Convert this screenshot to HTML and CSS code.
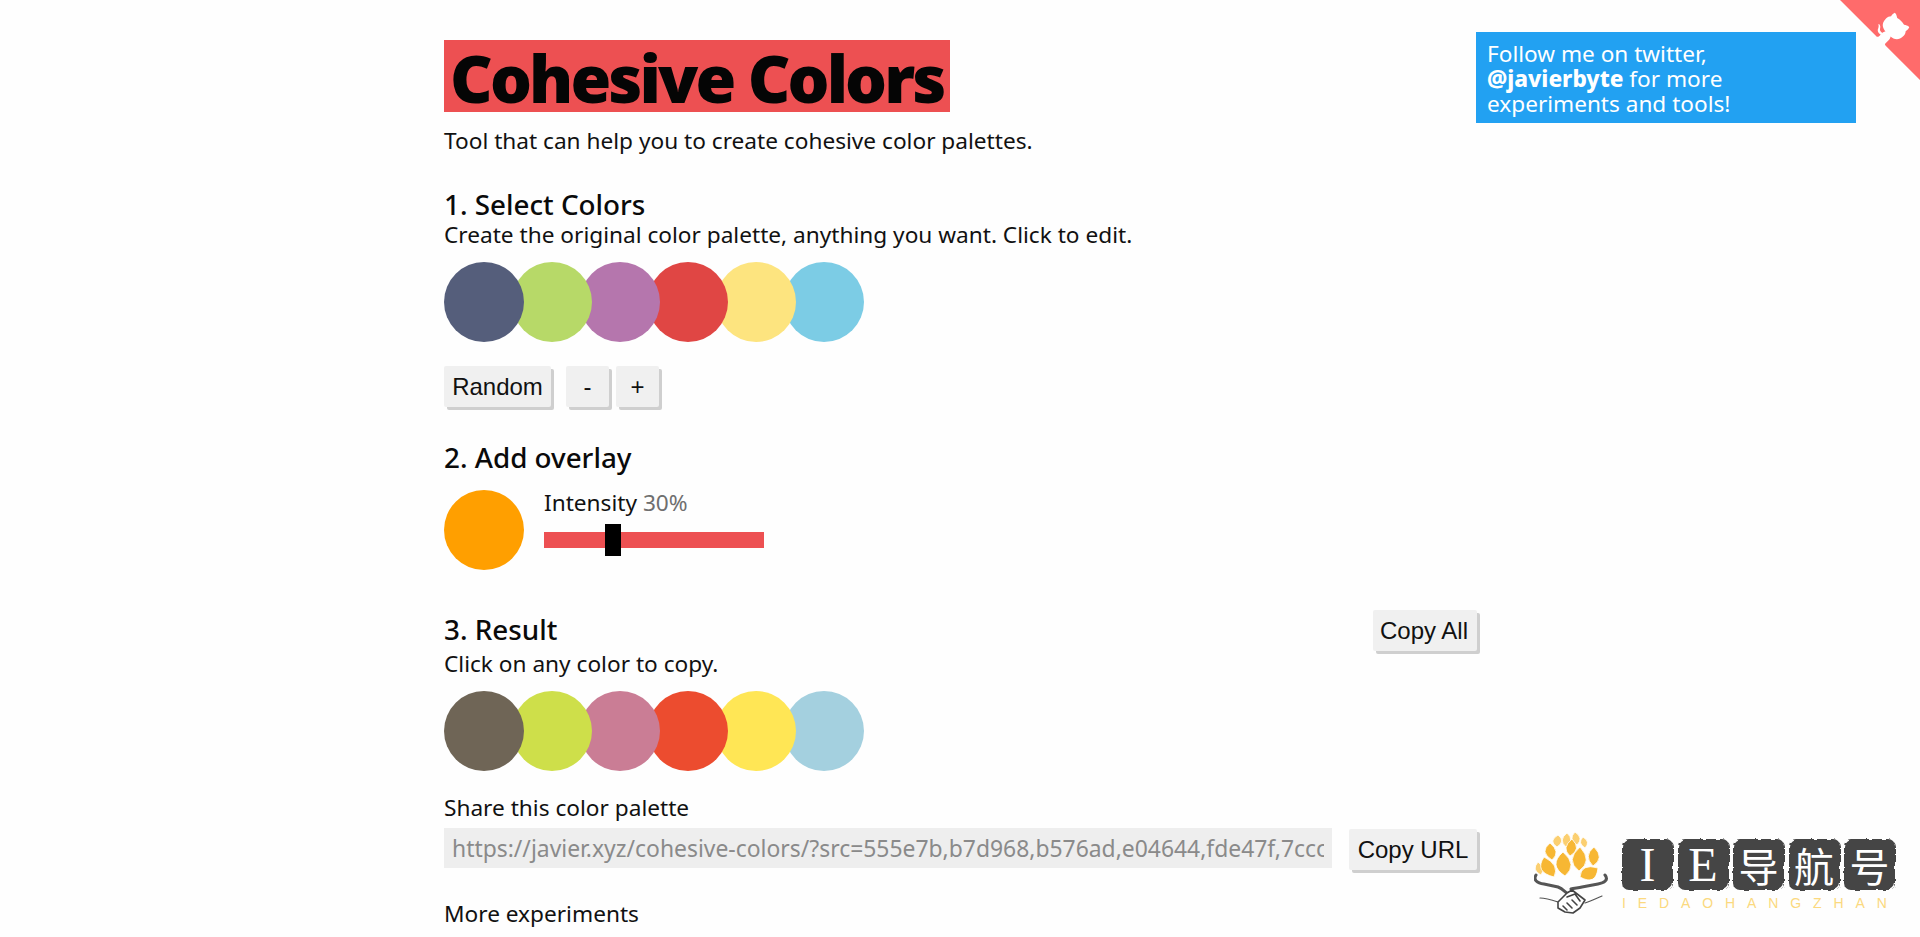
FILE: index.html
```html
<!DOCTYPE html>
<html lang="en">
<head>
<meta charset="utf-8">
<title>Cohesive Colors</title>
<link rel="stylesheet" href="styles.css">
</head>
<body>
<a class="corner" href="#" aria-label="View source">
  <svg width="80" height="80" viewBox="0 0 250 250" aria-hidden="true">
    <path class="corner-bg" d="M0,0 L115,115 L130,115 L142,142 L250,250 L250,0 Z"></path>
    <path class="corner-cat" d="M128.3,109.0 C113.8,99.7 119.0,89.6 119.0,89.6 C122.0,82.7 120.5,78.6 120.5,78.6 C119.2,72.0 123.4,76.3 123.4,76.3 C127.3,80.9 125.5,87.3 125.5,87.3 C122.9,97.6 130.6,101.9 134.4,103.2"></path>
    <path class="corner-cat" d="M115.0,115.0 C114.9,115.1 118.7,116.5 119.8,115.4 L133.7,101.6 C136.9,99.2 139.9,98.4 142.2,98.6 C133.8,88.0 127.5,74.4 143.8,58.0 C148.5,53.4 154.0,51.2 159.7,51.0 C160.3,49.4 163.2,43.6 171.4,40.1 C171.4,40.1 176.1,42.5 178.8,56.2 C183.1,58.6 187.2,61.8 190.9,65.4 C194.5,69.0 197.7,73.2 200.1,77.6 C213.8,80.2 216.3,84.9 216.3,84.9 C212.7,93.1 206.9,96.0 205.4,96.6 C205.1,102.4 203.0,107.8 198.3,112.5 C181.9,128.9 168.3,122.5 157.7,114.1 C157.9,116.9 156.7,120.9 152.7,124.9 L141.0,136.5 C139.8,137.7 141.6,141.9 141.8,141.8 Z"></path>
  </svg>
</a>
<aside class="follow">Follow me on twitter, <b>@javierbyte</b> for more experiments and tools!</aside>
<main class="page">
  <header class="head">
    <h1 class="title">Cohesive Colors</h1>
    <p class="lead">Tool that can help you to create cohesive color palettes.</p>
  </header>
  <section class="sec-select">
    <h2 class="heading">1. Select Colors</h2>
    <p class="text text-tight">Create the original color palette, anything you want. Click to edit.</p>
    <div class="dots">
      <span class="dot c1"></span><span class="dot c2"></span><span class="dot c3"></span><span class="dot c4"></span><span class="dot c5"></span><span class="dot c6"></span>
    </div>
    <div class="actions">
      <button class="btn btn-random">Random</button>
      <button class="btn btn-small btn-minus">-</button>
      <button class="btn btn-small">+</button>
    </div>
  </section>
  <section class="sec-overlay">
    <h2 class="heading">2. Add overlay</h2>
    <div class="overlay-row">
      <span class="dot overlay-dot"></span>
      <div class="intensity">
        <div class="text">Intensity <span class="muted">30%</span></div>
        <div class="slider"><span class="thumb"></span></div>
      </div>
    </div>
  </section>
  <section class="sec-result">
    <div class="result-head">
      <h2 class="heading">3. Result</h2>
      <button class="btn btn-copyall">Copy All</button>
    </div>
    <p class="text">Click on any color to copy.</p>
    <div class="dots">
      <span class="dot r1"></span><span class="dot r2"></span><span class="dot r3"></span><span class="dot r4"></span><span class="dot r5"></span><span class="dot r6"></span>
    </div>
  </section>
  <section class="sec-share">
    <div class="text">Share this color palette</div>
    <div class="share-row">
      <input class="url" readonly value="https://javier.xyz/cohesive-colors/?src=555e7b,b7d968,b576ad,e04644,fde47f,7ccce5">
      <button class="btn btn-copyurl">Copy URL</button>
    </div>
    <div class="text more">More experiments</div>
  </section>
</main>
<div class="mark">
  <svg class="mark-icon" width="76" height="84" viewBox="0 0 76 84" aria-hidden="true">
    <defs>
      <filter id="rough" x="-10%" y="-10%" width="120%" height="120%">
        <feTurbulence type="fractalNoise" baseFrequency="0.16" numOctaves="2" seed="4"></feTurbulence>
        <feDisplacementMap in="SourceGraphic" scale="4"></feDisplacementMap>
      </filter>
    </defs>
    <g class="leaf-b">
      <path d="M24 3Q14 9 23 15Q32 9 24 3Z"></path>
      <path d="M33 1Q24 8 32 15Q41 8 33 1Z"></path>
      <path d="M41 0Q34 7 43 13Q50 6 41 0Z"></path>
      <path d="M49 5Q43 11 51 16Q57 10 49 5Z"></path>
      <path d="M4 30Q-3 38 7 43Q12 36 4 30Z"></path>
    </g>
    <g class="leaf-a">
      <path d="M16 11Q5 20 18 28Q27 20 16 11Z"></path>
      <path d="M38 7Q27 16 36 24Q48 17 38 7Z"></path>
      <path d="M60 15Q49 24 59 34Q71 26 60 15Z"></path>
      <path d="M10 25Q0 40 20 45Q26 33 10 25Z"></path>
      <path d="M29 20Q14 33 31 44Q44 33 29 20Z"></path>
      <path d="M46 15Q31 28 45 39Q59 29 46 15Z"></path>
      <path d="M64 36Q47 31 46 45Q62 54 64 36Z"></path>
    </g>
    <path class="bowl" d="M2 43C-1 48 3 51 10 52L24 55C29 57 31 60 33 61M71 43C75 48 70 51 64 52L48 55C44 56 40 56 37 57"></path>
    <path class="hand-line" d="M6 66C12 66 18 68 24 70M51 71C57 69 63 66 68 64"></path>
    <path class="hand" d="M24 70L33 61L38 58L51 68L46 76L39 81L31 80L24 76ZM33 65L41 62L46 69M29 74L33 78M33 71L38 76M38 68L43 73"></path>
  </svg>
  <div class="mark-main">
    <div class="mark-tiles">
      <span class="tile tile-latin">I</span><span class="tile tile-latin">E</span><span class="tile">导</span><span class="tile">航</span><span class="tile">号</span>
    </div>
    <div class="mark-sub">IEDAOHANGZHAN</div>
  </div>
</div>
</body>
</html>
```
FILE: styles.css
```css
* { box-sizing: border-box; }
html, body { margin: 0; height: 100%; }
body {
  background: #fefefe;
  color: #111;
  font-family: "Noto Sans", "Open Sans", sans-serif;
  font-size: 22.65px;
  overflow: hidden;
  position: relative;
}
.page { width: 1036px; margin-left: 444px; padding-top: 40px; }
.title {
  margin: 0;
  height: 72px;
  width: 506px;
  padding: 0 6px;
  background: #ed5052;
  color: #050505;
  font-size: 66px;
  font-weight: 900;
  line-height: 75px;
  letter-spacing: -2.9px;
  white-space: nowrap;
}
.lead { margin: 14px 0 0; line-height: 30px; height: 30px; }
.heading { margin: 0; font-size: 27.8px; font-weight: 500; line-height: 36px; color: #0a0a0a; }
.text { margin: 0; line-height: 30px; }
.text-tight { margin-top: -2px; }
.sec-select { margin-top: 30px; }
.dots { display: flex; margin-top: 12px; }
.dot { display: block; width: 80px; height: 80px; border-radius: 50%; flex: none; }
.dots .dot { position: relative; }
.dots .dot + .dot { margin-left: -12px; }
.c1, .r1 { z-index: 6; }
.c2, .r2 { z-index: 5; }
.c3, .r3 { z-index: 4; }
.c4, .r4 { z-index: 3; }
.c5, .r5 { z-index: 2; }
.c6, .r6 { z-index: 1; }
.c1 { background: #555e7b; }
.c2 { background: #b7d968; }
.c3 { background: #b576ad; }
.c4 { background: #e04644; }
.c5 { background: #fde47f; }
.c6 { background: #7ccce5; }
.r1 { background: #6f6556; }
.r2 { background: #cedf4a; }
.r3 { background: #ca7d95; }
.r4 { background: #ec4c2f; }
.r5 { background: #ffe655; }
.r6 { background: #a4d0df; }
.actions { display: flex; margin-top: 24px; }
.btn {
  height: 41px;
  padding: 0;
  border: 0;
  background: #f0f0f0;
  box-shadow: 3px 3px 0 #cfcfcf;
  color: #111;
  font-family: "Liberation Sans", Arial, sans-serif;
  font-size: 24px;
  line-height: 36px;
  border-radius: 2px;
}
.btn-random { width: 107px; }
.btn-small { width: 43px; margin-left: 7px; }
.btn-minus { margin-left: 15px; }
.sec-overlay { margin-top: 32px; }
.overlay-row { display: flex; gap: 20px; margin-top: 15px; }
.overlay-dot { background: #ff9f00; }
.intensity { margin-top: -2px; }
.muted { color: #6f6f6f; }
.slider { position: relative; width: 220px; height: 16px; margin-top: 14px; background: #ed5052; }
.thumb { position: absolute; left: 61px; top: -8px; width: 16px; height: 32px; background: #000; }
.sec-result { margin-top: 40px; }
.result-head { display: flex; justify-content: space-between; align-items: flex-start; height: 36px; }
.result-head .heading { margin-top: 1px; }
.btn-copyall { width: 104px; margin-right: 3px; padding-right: 2px; }
.sec-result .text { margin-top: 3px; }
.sec-share { margin-top: 22px; }
.share-row { display: flex; justify-content: space-between; margin-top: 5px; }
.url {
  width: 888px;
  height: 40px;
  padding: 0 8px;
  border: 0;
  outline: 0;
  background: #eeeeee;
  color: #8a8a8a;
  font-family: inherit;
  font-size: 22.9px;
}
.btn-copyurl { width: 128px; margin-right: 3px; margin-top: 1px; }
.more { margin-top: 29px; }
.follow {
  position: absolute;
  left: 1476px;
  top: 32px;
  width: 380px;
  height: 91px;
  padding: 9px 11px;
  background: #22a1f2;
  color: #fff;
  font-size: 22.6px;
  line-height: 25px;
}
.follow b { font-weight: 800; }
.corner { position: absolute; top: 0; right: 0; display: block; width: 80px; height: 80px; }
.corner svg { display: block; }
.corner-bg { fill: #ff6b6b; }
.corner-cat { fill: #fff; }
.mark { position: absolute; left: 1534px; top: 832px; display: flex; gap: 12px; }
.mark-icon { display: block; flex: none; }
.leaf-a { fill: #f7b733; stroke: #fff; stroke-width: 0.8; }
.leaf-b { fill: #fbcf70; stroke: #fff; stroke-width: 0.8; }
.bowl { fill: none; stroke: #555; stroke-width: 3; stroke-linecap: round; }
.hand-line { fill: none; stroke: #555; stroke-width: 1.2; stroke-linecap: round; }
.hand { fill: #fff; stroke: #444; stroke-width: 1.6; stroke-linejoin: round; stroke-linecap: round; }
.mark-main { padding-top: 7px; }
.mark-tiles { display: flex; gap: 4.5px; }
.tile {
  position: relative;
  isolation: isolate;
  display: flex;
  align-items: center;
  justify-content: center;
  width: 51px;
  height: 51px;
  color: #fff;
  font-family: "Noto Sans CJK SC", sans-serif;
  font-size: 40px;
  line-height: 1;
}
.tile::before {
  content: "";
  position: absolute;
  inset: 0;
  z-index: -1;
  border-radius: 7px;
  background: #444;
  filter: url(#rough);
}
.tile-latin { font-family: "Liberation Serif", serif; font-size: 48px; }
.mark-sub {
  margin-top: 5px;
  color: #fbd97f;
  font-family: "Liberation Sans", sans-serif;
  font-size: 14px;
  line-height: 16px;
  letter-spacing: 11.9px;
  white-space: nowrap;
}
```
